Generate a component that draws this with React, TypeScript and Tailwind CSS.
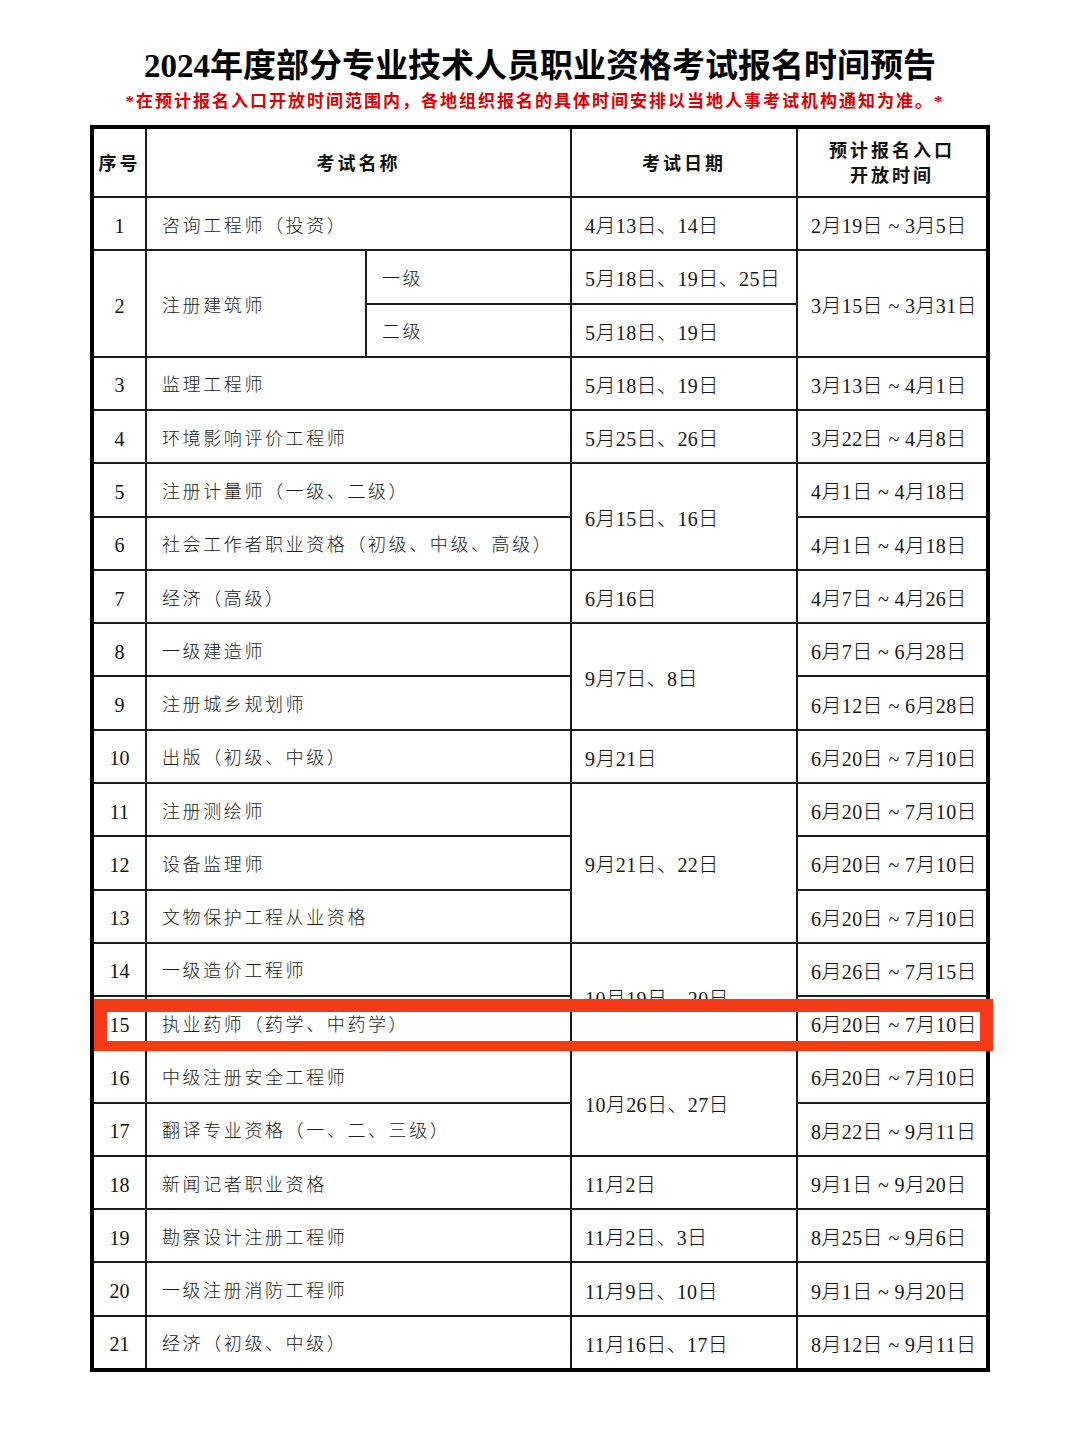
import React from "react";

const FONT = "font-['Liberation_Serif','Noto_Sans_CJK_SC',serif]";

type Row = {
  n: string;
  name: string;
  date?: string;
  dateSpan?: 1 | 2 | 3;
  reg: string;
};

const rows: Row[] = [
  { n: "3", name: "监理工程师", date: "5月18日、19日", reg: "3月13日 ~ 4月1日" },
  { n: "4", name: "环境影响评价工程师", date: "5月25日、26日", reg: "3月22日 ~ 4月8日" },
  { n: "5", name: "注册计量师（一级、二级）", date: "6月15日、16日", dateSpan: 2, reg: "4月1日 ~ 4月18日" },
  { n: "6", name: "社会工作者职业资格（初级、中级、高级）", reg: "4月1日 ~ 4月18日" },
  { n: "7", name: "经济（高级）", date: "6月16日", reg: "4月7日 ~ 4月26日" },
  { n: "8", name: "一级建造师", date: "9月7日、8日", dateSpan: 2, reg: "6月7日 ~ 6月28日" },
  { n: "9", name: "注册城乡规划师", reg: "6月12日 ~ 6月28日" },
  { n: "10", name: "出版（初级、中级）", date: "9月21日", reg: "6月20日 ~ 7月10日" },
  { n: "11", name: "注册测绘师", date: "9月21日、22日", dateSpan: 3, reg: "6月20日 ~ 7月10日" },
  { n: "12", name: "设备监理师", reg: "6月20日 ~ 7月10日" },
  { n: "13", name: "文物保护工程从业资格", reg: "6月20日 ~ 7月10日" },
  { n: "14", name: "一级造价工程师", date: "10月19日、20日", dateSpan: 2, reg: "6月26日 ~ 7月15日" },
  { n: "15", name: "执业药师（药学、中药学）", reg: "6月20日 ~ 7月10日" },
  { n: "16", name: "中级注册安全工程师", date: "10月26日、27日", dateSpan: 2, reg: "6月20日 ~ 7月10日" },
  { n: "17", name: "翻译专业资格（一、二、三级）", reg: "8月22日 ~ 9月11日" },
  { n: "18", name: "新闻记者职业资格", date: "11月2日", reg: "9月1日 ~ 9月20日" },
  { n: "19", name: "勘察设计注册工程师", date: "11月2日、3日", reg: "8月25日 ~ 9月6日" },
  { n: "20", name: "一级注册消防工程师", date: "11月9日、10日", reg: "9月1日 ~ 9月20日" },
  { n: "21", name: "经济（初级、中级）", date: "11月16日、17日", reg: "8月12日 ~ 9月11日" },
];

const spanCls: Record<number, string> = { 1: "", 2: "row-span-2", 3: "row-span-3" };

const seqCls = "bg-white flex items-center justify-center pt-[4px] text-[20px] text-[#111]";
const nameCls = "bg-white flex items-center pl-[15px] pt-[5px] text-[18px] tracking-[2.6px] font-light text-[#1c1c1c] whitespace-nowrap";
const dateCls = "bg-white flex items-center pl-[13px] pt-[5px] text-[20px] tracking-[0.4px] font-light text-[#161616] whitespace-nowrap";
const headCls = "bg-white flex flex-col items-center justify-center pt-[3px] text-[18px] tracking-[3px] font-bold text-[#111] leading-[25px]";

export default function App() {
  return (
    <div className={`w-[1080px] min-h-[1429px] bg-white ${FONT}`}>
      <div className="pt-[47px] text-center text-[33px] leading-[38px] font-bold text-black">
        2024年度部分专业技术人员职业资格考试报名时间预告
      </div>
      <div className="mt-[6px] pr-[10px] text-center text-[17px] leading-[22px] font-bold tracking-[2px] text-[#d80000]">
        *在预计报名入口开放时间范围内，各地组织报名的具体时间安排以当地人事考试机构通知为准。*
      </div>
      <div className="relative mx-auto mt-[12px] w-[900px] border-4 border-black">
        <div className="grid h-[1239px] grid-cols-[51px_218px_203px_224px_188px] grid-rows-[67px_repeat(22,minmax(0,1fr))] gap-[2px] bg-[#1a1a1a]">
          <div className={headCls}>序号</div>
          <div className={`${headCls} col-span-2`}>考试名称</div>
          <div className={headCls}>考试日期</div>
          <div className={headCls}>
            <span>预计报名入口</span>
            <span>开放时间</span>
          </div>

          <div className={seqCls}>1</div>
          <div className={`${nameCls} col-span-2`}>咨询工程师（投资）</div>
          <div className={dateCls}>4月13日、14日</div>
          <div className={dateCls}>2月19日 ~ 3月5日</div>

          <div className={`${seqCls} row-span-2`}>2</div>
          <div className={`${nameCls} row-span-2`}>注册建筑师</div>
          <div className={nameCls}>一级</div>
          <div className={dateCls}>5月18日、19日、25日</div>
          <div className={`${dateCls} row-span-2`}>3月15日 ~ 3月31日</div>
          <div className={nameCls}>二级</div>
          <div className={dateCls}>5月18日、19日</div>

          {rows.map((r) => (
            <React.Fragment key={r.n}>
              <div className={seqCls}>{r.n}</div>
              <div className={`${nameCls} col-span-2`}>{r.name}</div>
              {r.date !== undefined && (
                <div className={`${dateCls} ${spanCls[r.dateSpan ?? 1]}`}>{r.date}</div>
              )}
              <div className={dateCls}>{r.reg}</div>
            </React.Fragment>
          ))}
        </div>
        <div className="pointer-events-none absolute left-0 top-[870px] h-[52px] w-[899px] border-x-[13px] border-t-[13px] border-b-[10px] border-[#f43a18]" />
      </div>
    </div>
  );
}
